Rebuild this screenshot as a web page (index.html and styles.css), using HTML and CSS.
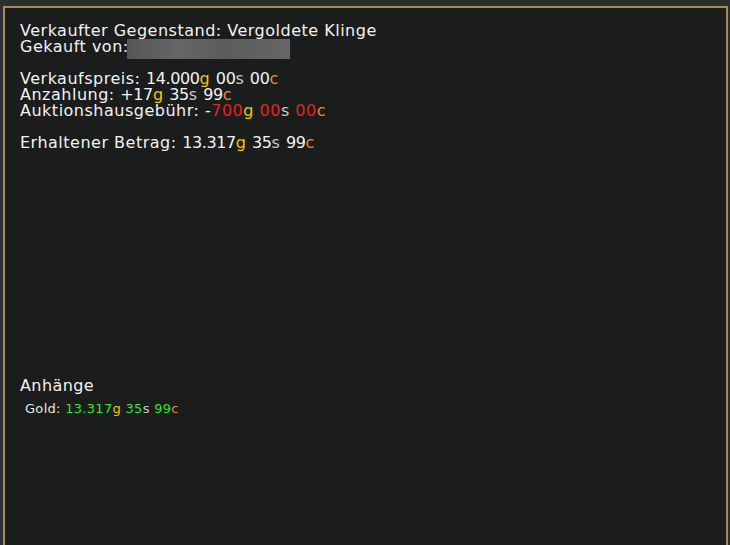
FILE: index.html
```html
<!DOCTYPE html>
<html lang="de">
<head>
<meta charset="utf-8">
<link rel="stylesheet" href="styles.css">
</head>
<body>
<div class="frame">
  <div class="panel">
    <div class="body-text">
      <div>Verkaufter Gegenstand: Vergoldete Klinge</div>
      <div class="buyer">Gekauft von:<span class="blur"></span></div>
      <div class="gap"></div>
      <div>Verkaufspreis: <span class="n">14.000</span><span class="g">g</span> <span class="n">00</span><span class="s">s</span> <span class="n">00</span><span class="c">c</span></div>
      <div>Anzahlung: <span class="n">+17</span><span class="g">g</span> <span class="n">35</span><span class="s">s</span> <span class="n">99</span><span class="c">c</span></div>
      <div>Auktionshausgebühr: -<span class="r">700</span><span class="g">g</span> <span class="r">00</span><span class="s">s</span> <span class="r">00</span><span class="c">c</span></div>
      <div class="gap"></div>
      <div>Erhaltener Betrag: <span class="n">13.317</span><span class="g">g</span> <span class="n">35</span><span class="s">s</span> <span class="n">99</span><span class="c">c</span></div>
    </div>
    <div class="attach">
      <div class="attach-title">Anhänge</div>
      <div class="gold-row">Gold: <span class="gr">13.317</span><span class="g">g</span> <span class="gr">35</span><span class="s">s</span> <span class="gr">99</span><span class="c">c</span></div>
    </div>
  </div>
</div>
</body>
</html>
```
FILE: styles.css
```css
html, body {
  margin: 0;
  padding: 0;
  height: 100%;
  background: #2b2f2f;
  overflow: hidden;
}
.frame {
  height: 100%;
  padding: 6px 2px 0 3px;
  box-sizing: border-box;
  overflow: hidden;
}
.panel {
  height: 560px;
  background: #1b1c1c;
  border-top: 2px solid #a88a58;
  border-left: 2px solid #a88a58;
  border-right: 2px solid #a88a58;
  padding: 15px 15px 0 15px;
  box-sizing: border-box;
  font-family: "DejaVu Sans", sans-serif;
  color: #f2f2f2;
}
.body-text {
  font-size: 16px;
  line-height: 16px;
  letter-spacing: 0.5px;
}
.gap { height: 16px; }
.buyer {
  display: flex;
  align-items: center;
  height: 16px;
}
.blur {
  display: inline-block;
  width: 163px;
  height: 20px;
  margin-left: -2px;
  margin-top: 4px;
  background: linear-gradient(90deg, #555 0%, #666 30%, #5c5c5c 60%, #666 100%);
  filter: blur(0.6px);
}
.n { letter-spacing: -0.4px; }
.g { color: #f0c800; }
.s { color: #c9c9c9; }
.c { color: #e08a4c; }
.r { color: #e3231d; }
.gr { color: #2ee62e; }
.attach {
  margin-top: 226px;
}
.attach-title {
  font-size: 16px;
  line-height: 18px;
  letter-spacing: 0.4px;
}
.gold-row {
  font-family: "DejaVu Sans", sans-serif;
  font-size: 13px;
  line-height: 16px;
  letter-spacing: 0.3px;
  margin-top: 6px;
  padding-left: 5px;
  color: #e6e6e6;
}
```
